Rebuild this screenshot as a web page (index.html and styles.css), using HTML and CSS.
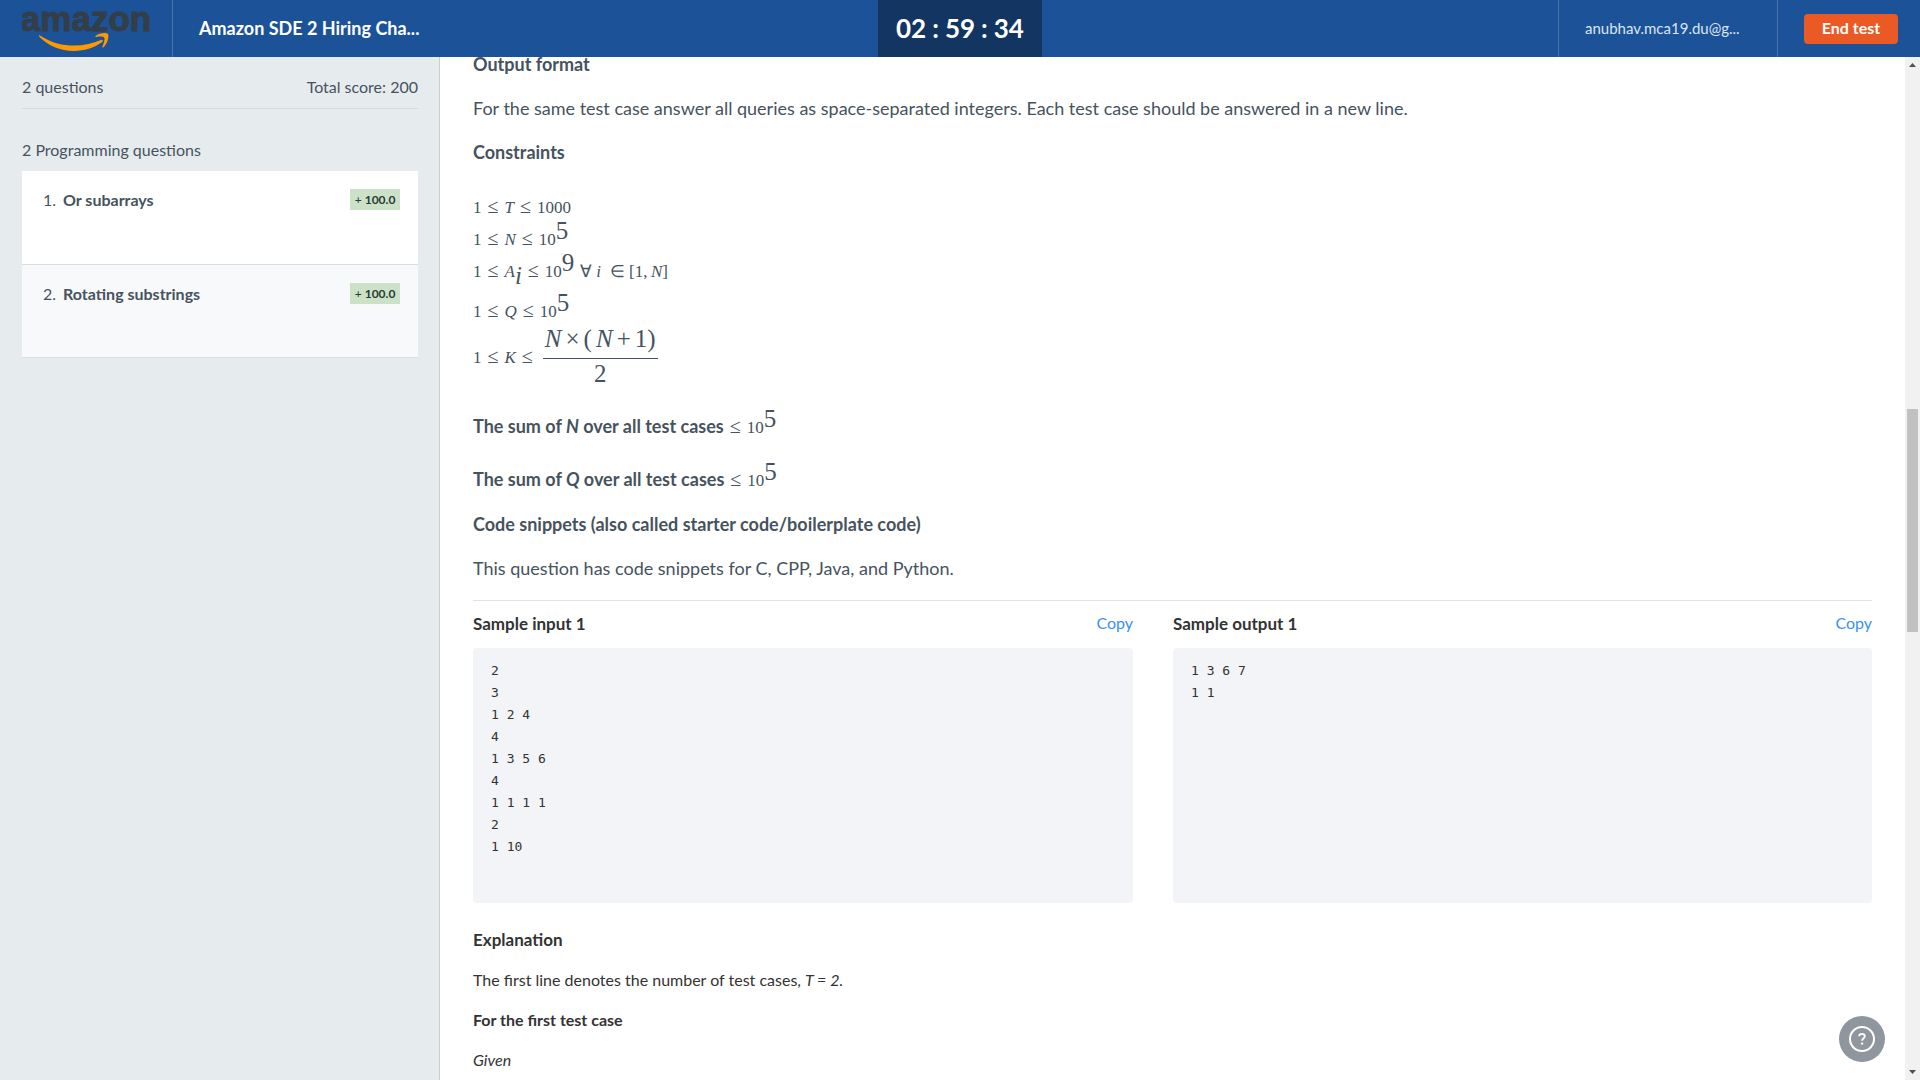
FILE: index.html
```html
<!DOCTYPE html>
<html lang="en">
<head>
<meta charset="utf-8">
<title>Amazon SDE 2 Hiring Challenge</title>
<link rel="stylesheet" href="styles.css">
</head>
<body>
<header class="topbar">
  <div class="logo">
    <svg width="130" height="57" viewBox="0 0 130 57" role="img" aria-label="amazon">
      <text class="logo-word" x="64" y="31" text-anchor="middle">amazon</text>
      <path fill="#ff9900" d="M18 35.5C31 43.500 40 45.500 52 45.500C62 45.500 71 43.500 79 40C80.500 39.300 81.600 41 80.200 42.100C72 48 62 51 52 51C38 51 26 45.500 17.500 37C16.700 36 17 35 18 35.500Z"/>
      <path fill="#ff9900" d="M73.500 36C78 32.500 84 32.500 86 34C87.300 36 85.500 44 81.500 47.300C80.800 47.900 80 47.500 80.400 46.600C81.700 43.500 83.200 39 82.300 37.700C81.300 36.500 77.500 36.400 74.300 36.900C73.300 37 73 36.500 73.500 36Z"/>
    </svg>
  </div>
  <h1 class="test-title">Amazon SDE 2 Hiring Cha...</h1>
  <div class="timer"><span>02</span><span>:</span><span>59</span><span>:</span><span>34</span></div>
  <div class="account">
    <div class="email">anubhav.mca19.du@g...</div>
    <div class="end"><button type="button" class="end-btn">End test</button></div>
  </div>
</header>
<div class="layout">
  <aside class="sidebar">
    <div class="summary"><span>2 questions</span><span>Total score: 200</span></div>
    <h2 class="group-title">2 Programming questions</h2>
    <ul class="questions">
      <li class="question current"><span class="num">1.</span><span class="name">Or subarrays</span><span class="score">+ <b>100.0</b></span></li>
      <li class="question"><span class="num">2.</span><span class="name">Rotating substrings</span><span class="score">+ <b>100.0</b></span></li>
    </ul>
  </aside>
  <main class="content">
    <article class="problem">
      <h3>Output format</h3>
      <p>For the same test case answer all queries as space-separated integers. Each test case should be answered in a new line.</p>
      <h3>Constraints</h3>
      <div class="constraints">
        <div class="math row">1<span class="rel">≤</span><i>T</i><span class="rel">≤</span>1000</div>
        <div class="math row">1<span class="rel">≤</span><i>N</i><span class="rel">≤</span>10<sup>5</sup></div>
        <div class="math row row-sub">1<span class="rel">≤</span><i>A</i><sub>i</sub><span class="rel">≤</span>10<sup>9</sup><span class="forall">∀</span><i>i</i><span class="in">∈</span>[1,&thinsp;<i>N</i>]</div>
        <div class="math row">1<span class="rel">≤</span><i>Q</i><span class="rel">≤</span>10<sup>5</sup></div>
        <div class="math row-frac"><span>1<span class="rel">≤</span><i>K</i><span class="rel">≤</span></span><span class="frac"><span class="over"><i>N</i><span>×</span><span>(</span><i>N</i><span>+</span><span>1)</span></span><span class="under">2</span></span></div>
      </div>
      <h3 class="sum">The sum of <em>N</em> over all test cases<span class="math"><span class="rel">≤</span>10<sup>5</sup></span></h3>
      <h3 class="sum">The sum of <em>Q</em> over all test cases<span class="math"><span class="rel">≤</span>10<sup>5</sup></span></h3>
      <h3 class="snippets">Code snippets (also called starter code/boilerplate code)</h3>
      <p>This question has code snippets for C, CPP, Java, and Python.</p>
    </article>
    <section class="samples">
      <div class="sample">
        <div class="sample-head"><h4>Sample input 1</h4><a href="#input" class="copy">Copy</a></div>
<pre id="input">2
3
1 2 4
4
1 3 5 6
4
1 1 1 1
2
1 10</pre>
      </div>
      <div class="sample">
        <div class="sample-head"><h4>Sample output 1</h4><a href="#output" class="copy">Copy</a></div>
<pre id="output">1 3 6 7
1 1</pre>
      </div>
    </section>
    <section class="explanation">
      <h4>Explanation</h4>
      <p>The first line denotes the number of test cases, <em>T = 2.</em></p>
      <p><b>For the first test case</b></p>
      <p><em>Given</em></p>
    </section>
  </main>
  <div class="scrollbar" aria-hidden="true">
    <svg width="15" height="17" viewBox="0 0 15 17"><path fill="#505050" d="M4 10L7.500 6L11 10Z"/></svg>
    <div class="track"><div class="thumb"></div></div>
    <svg width="15" height="17" viewBox="0 0 15 17"><path fill="#505050" d="M4 7L7.500 11L11 7Z"/></svg>
  </div>
</div>
<button type="button" class="help" aria-label="Help">
  <svg width="26" height="26" viewBox="0 0 26 26" aria-hidden="true"><circle cx="13" cy="13" r="12" fill="none" stroke="#fff" stroke-width="2"/><path d="M10.200 10.300C10.200 8.700 11.400 7.800 13 7.800C14.700 7.800 15.800 8.800 15.800 10.200C15.800 12.300 13.100 12.300 13.100 14.700" fill="none" stroke="#fff" stroke-width="1.800"/><circle cx="13.100" cy="17.600" r="1.200" fill="#fff"/></svg>
</button>
</body>
</html>
```
FILE: styles.css
```css
* { box-sizing: border-box; }
body {
  margin: 0;
  height: 100vh;
  display: flex;
  flex-direction: column;
  overflow: hidden;
  background: #fff;
  color: #46535e;
  font-family: Lato, "Open Sans", sans-serif;
  font-size: 16px;
}
h1, h2, h3, h4, p, ul, pre { margin: 0; padding: 0; }

.topbar {
  flex: none;
  height: 57px;
  display: grid;
  grid-template-columns: 173px minmax(0, 705px) 164px 1fr;
  background: #1c5298;
  color: #fff;
}
.logo { padding-left: 22px; border-right: 1px solid #4975ad; }
.logo svg { display: block; }
.logo-word {
  fill: #333e48;
  stroke: #333e48;
  stroke-width: 1px;
  font: bold 35px "Liberation Sans", sans-serif;
}
.test-title { padding-left: 26px; font-size: 18px; font-weight: 700; line-height: 56px; white-space: nowrap; }
.timer {
  display: flex;
  justify-content: center;
  align-items: center;
  gap: 6px;
  padding-bottom: 2px;
  background: #133562;
  font-size: 26px;
  font-weight: 700;
  line-height: 54px;
}
.account { display: flex; justify-content: flex-end; }
.email {
  width: 220px;
  padding-left: 26px;
  border: solid #4975ad;
  border-width: 0 1px;
  color: #dbe5f1;
  font-size: 15px;
  line-height: 57px;
}
.end { width: 142px; padding: 14px 22px 0 26px; }
.end-btn {
  width: 100%;
  height: 30px;
  padding: 0 0 3px;
  border: 0;
  border-radius: 4px;
  background: #eb5a24;
  color: #fff;
  font: 700 16px Lato, sans-serif;
}

.layout { flex: 1; min-height: 0; display: flex; }
.sidebar {
  flex: none;
  width: 440px;
  padding: 18px 21px 0 22px;
  border-right: 1px solid #c8cdd1;
  background: #e6ecee;
}
.summary {
  display: flex;
  justify-content: space-between;
  padding-bottom: 9px;
  border-bottom: 1px solid #d6dadd;
  line-height: 24px;
}
.group-title { margin: 29px 0 9px; font-size: 16px; font-weight: 400; line-height: 24px; }
.questions { list-style: none; }
.question {
  display: flex;
  align-items: flex-start;
  height: 93px;
  padding: 18px 18px 0 21px;
  border-bottom: 1px solid #dadddf;
  background: #f8f9fb;
  line-height: 22px;
}
.current { background: #fff; height: 94px; }
.name { margin-left: 7px; font-weight: 700; }
.score {
  margin-left: auto;
  width: 50px;
  background: #cbe2c9;
  color: #2b3a35;
  font-size: 12px;
  line-height: 21px;
  text-align: center;
}

.content { flex: 1; min-width: 0; padding: 0 33px; }
.problem { padding-bottom: 20px; border-bottom: 1px solid #dfe1e3; }
.problem h3, .problem p { margin-bottom: 20px; font-size: 18px; line-height: 24px; }
.problem h3:first-child { margin-bottom: 25px; line-height: 14px; }
.problem p:last-child { margin-bottom: 0; }
.math { font-family: "Liberation Serif", serif; font-size: 17px; font-weight: 400; white-space: nowrap; }
.math sup, .math sub { font-size: 25px; line-height: 0; }
.math sup { vertical-align: 6px; }
.math sub { vertical-align: -7px; font-style: italic; }
.constraints { margin: 27px 0 25px; }
.row { height: 32px; line-height: 34px; }
.row-sub { height: 40px; }
.rel { margin: 0 6px; font-size: 20px; line-height: 0; }
.forall { margin: 0 4px 0 6px; }
.in { margin: 0 4px 0 9px; }
.row-frac { display: flex; align-items: center; gap: 4px; height: 62px; }
.frac { display: flex; flex-direction: column; font-size: 25px; text-align: center; }
.over { display: flex; gap: 4px; height: 32px; padding: 0 2px; border-bottom: 1px solid #46535e; line-height: 24px; }
.under { height: 30px; line-height: 30px; }
.problem .sum { height: 24px; margin-bottom: 29px; }
.problem .snippets { margin-top: -8px; }

.samples { display: grid; grid-template-columns: 660fr 699fr; gap: 40px; padding-top: 11px; color: #333; }
.sample { display: flex; flex-direction: column; }
.sample-head { display: flex; justify-content: space-between; margin-bottom: 12px; line-height: 24px; }
.samples h4, .explanation h4 { font-size: 17px; }
.copy { color: #3b8ff3; text-decoration: none; line-height: 22px; }
.sample pre {
  flex: 1;
  min-height: 255px;
  padding: 12px 18px;
  border-radius: 4px;
  background: #f2f4f8;
  font: 13px/22px "DejaVu Sans Mono", monospace;
}
.explanation { display: flex; flex-direction: column; gap: 16px; padding-top: 25px; color: #333; line-height: 24px; }

.scrollbar { flex: none; width: 15px; display: flex; flex-direction: column; background: #f1f1f1; }
.scrollbar svg { display: block; flex: none; }
.track { flex: 1; padding: 0 2px; display: grid; grid-template-rows: 335fr 223fr 431fr; }
.thumb { grid-row: 2; background: #c1c1c1; }

.help {
  position: absolute;
  right: 35px;
  bottom: 18px;
  width: 46px;
  height: 46px;
  display: flex;
  align-items: center;
  justify-content: center;
  padding: 0;
  border: 0;
  border-radius: 50%;
  background: #8f969e;
}
```
